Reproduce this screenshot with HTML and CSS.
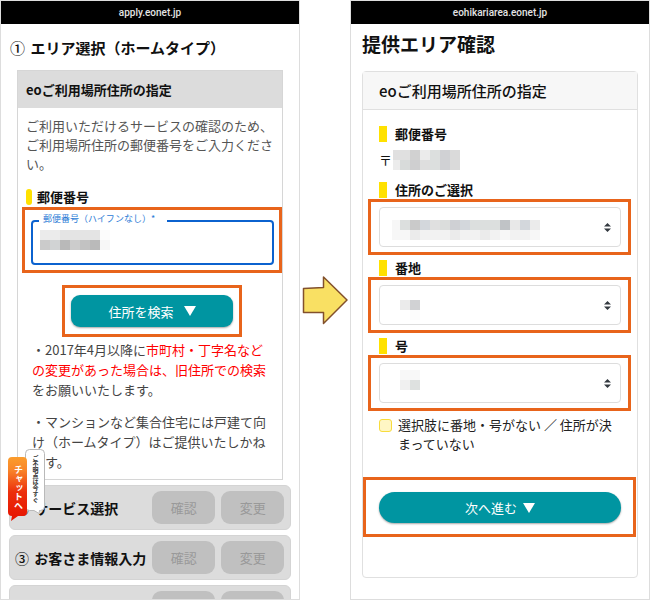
FILE: index.html
```html
<!DOCTYPE html>
<html lang="ja">
<head>
<meta charset="utf-8">
<title>eo エリア確認</title>
<link rel="stylesheet" href="styles.css">
</head>
<body>
<main class="page">
  <section class="phone phone-left">
    <div class="urlbar">apply.eonet.jp</div>
    <h1 class="step-title"><span class="num">①</span> エリア選択（ホームタイプ）</h1>
    <div class="panel">
      <h2 class="panel-head">eoご利用場所住所の指定</h2>
      <div class="panel-body">
        <p class="intro">ご利用いただけるサービスの確認のため、ご利用場所住所の郵便番号をご入力ください。</p>
        <h3 class="zip-heading">郵便番号</h3>
        <div class="mark mark-zip">
          <div class="field">
            <label class="field-label" for="zip">郵便番号（ハイフンなし）*</label>
            <input class="field-input" id="zip" type="text">
            <svg class="mosaic mosaic-zip" width="70" height="20" viewBox="0 0 7 2" shape-rendering="crispEdges" aria-hidden="true">
              <path fill="#ebebeb" d="M0 0h2v1H0z"/><path fill="#e4e4e4" d="M2 0h4v1H2z"/><path fill="#fcfcfc" d="M6 0h1v1H6z"/>
              <path fill="#cbcbcb" d="M0 1h1v1H0z"/><path fill="#d1d3d4" d="M1 1h1v1H1z"/><path fill="#b9b9b9" d="M2 1h1v1H2z"/>
              <path fill="#cccccc" d="M3 1h1v1H3z"/><path fill="#c2c2c2" d="M4 1h1v1H4z"/><path fill="#bababa" d="M5 1h1v1H5z"/><path fill="#f7f7f7" d="M6 1h1v1H6z"/>
            </svg>
          </div>
        </div>
        <div class="mark mark-search">
          <button class="btn btn-search" type="button">住所を検索
            <svg width="12" height="10" viewBox="0 0 12 10" aria-hidden="true"><path fill="#fff" d="M0 0h12L6 10z"/></svg>
          </button>
        </div>
        <p class="note">・2017年4月以降に<span class="alert">市町村・丁字名などの変更があった場合は、旧住所での検索</span>をお願いいたします。</p>
        <p class="note">・マンションなど集合住宅には戸建て向け（ホームタイプ）はご提供いたしかねます。</p>
      </div>
    </div>
    <div class="steps">
      <div class="step"><h2 class="step-name"><span class="num">②</span> サービス選択</h2><button class="step-btn" type="button" disabled>確認</button><button class="step-btn" type="button" disabled>変更</button></div>
      <div class="step"><h2 class="step-name"><span class="num">③</span> お客さま情報入力</h2><button class="step-btn" type="button" disabled>確認</button><button class="step-btn" type="button" disabled>変更</button></div>
      <div class="step"><h2 class="step-name"></h2><button class="step-btn" type="button" aria-label="確認" disabled></button><button class="step-btn" type="button" aria-label="変更" disabled></button></div>
    </div>
    <a class="chat" href="#">
      <svg class="chat-shape" width="37" height="72" viewBox="0 0 37 72" aria-hidden="true">
        <defs><linearGradient id="chatFill" x1="0" y1="0" x2="0" y2="1"><stop offset="0" stop-color="#fb9d2d"/><stop offset=".2" stop-color="#f9862a"/><stop offset=".55" stop-color="#ec2f0c"/><stop offset="1" stop-color="#e61200"/></linearGradient></defs>
        <path fill="#fff" stroke="#b9b9b9" d="M21.500.500h11a4 4 0 0 1 4 4v53a4 4 0 0 1-4 4h-1l-.500 3-5-3h-4.500a4 4 0 0 1-4-4v-53a4 4 0 0 1 4-4z"/>
        <path fill="url(#chatFill)" d="M4 8h11a4 4 0 0 1 4 4v51a4 4 0 0 1-4 4h-5l-7 5 1-5a4 4 0 0 1-4-4V12a4 4 0 0 1 4-4z"/>
      </svg>
      <span class="chat-main">チャットへ</span>
      <span class="chat-sub">ご不明点は今すぐ</span>
    </a>
  </section>

  <div class="flow">
    <svg width="46" height="50" viewBox="0 0 46 50" aria-hidden="true"><path fill="#f9e063" stroke="#82502c" stroke-width="1.500" stroke-linejoin="round" d="M1.500 13.500 21.500 12.500V2L45 25 21.500 48.500V37.500H1.500z"/></svg>
  </div>

  <section class="phone">
    <div class="urlbar">eohikariarea.eonet.jp</div>
    <h1 class="area-title">提供エリア確認</h1>
    <form class="card">
      <h2 class="card-head">eoご利用場所住所の指定</h2>
      <div class="card-body">
        <h3 class="label">郵便番号</h3>
        <p class="postal">〒
          <svg width="67" height="20" viewBox="0 0 67 20" shape-rendering="crispEdges" aria-hidden="true">
            <path fill="#e0e0e0" d="M0 0h17v10H0z"/><path fill="#d1d1d1" d="M17 0h10v10H17z"/><path fill="#ebebeb" d="M27 0h10v10H27z"/><path fill="#dcdfde" d="M37 0h10v20H37z"/><path fill="#d0d1d4" d="M47 0h10v20H47z"/><path fill="#dadada" d="M57 0h10v20H57z"/>
            <path fill="#ececec" d="M0 10h7v10H0z"/><path fill="#d8dbda" d="M7 10h10v10H7z"/><path fill="#cfcfd0" d="M17 10h10v10H17z"/><path fill="#dedede" d="M27 10h10v10H27z"/>
          </svg>
        </p>
        <label class="label" for="town">住所のご選択</label>
        <div class="mark mark-select">
          <div class="picker">
            <select class="select" id="town"><option></option></select>
            <svg class="mosaic mosaic-town" width="148" height="20" viewBox="0 0 148 20" shape-rendering="crispEdges" aria-hidden="true">
              <path fill="#f7f7f7" d="M0 0h148v20H0z"/>
              <path fill="#dcdfde" d="M8 0h10v10H8z"/><path fill="#cacaca" d="M18 0h10v10H18z"/><path fill="#d3d7dc" d="M28 0h10v10H28z"/><path fill="#e0e0e0" d="M38 0h10v10H38z"/><path fill="#dbdddc" d="M48 0h10v10H48z"/><path fill="#cfd0d4" d="M58 0h10v10H58z"/><path fill="#d3d7dc" d="M68 0h10v10H68z"/><path fill="#dcdfde" d="M78 0h30v10H78z"/><path fill="#c0c3c6" d="M108 0h10v10h-10z"/><path fill="#e8e8e8" d="M118 0h10v10h-10z"/><path fill="#d3d7dc" d="M128 0h10v10h-10z"/><path fill="#ebebeb" d="M138 0h10v10h-10z"/>
              <path fill="#ebebeb" d="M18 10h10v10H18zM58 10h10v10H58zM88 10h10v10H88z"/><path fill="#f2f2f2" d="M28 10h30v10H28zM68 10h20v10H68zM98 10h10v10H98zM118 10h20v10h-20z"/>
            </svg>
            <svg class="caret" width="7" height="9" viewBox="0 0 7 9" aria-hidden="true"><path fill="#343a40" d="M3.500 0 7 3.500H0zM0 5.500h7L3.500 9z"/></svg>
          </div>
        </div>
        <label class="label" for="block">番地</label>
        <div class="mark mark-select">
          <div class="picker">
            <select class="select" id="block"><option></option></select>
            <svg class="mosaic mosaic-block" width="20" height="20" viewBox="0 0 2 2" shape-rendering="crispEdges" aria-hidden="true"><path fill="#ebebeb" d="M0 0h1v1H0z"/><path fill="#d1d2d4" d="M1 0h1v1H1z"/><path fill="#fcfcfc" d="M1 1h1v1H1z"/></svg>
            <svg class="caret" width="7" height="9" viewBox="0 0 7 9" aria-hidden="true"><path fill="#343a40" d="M3.500 0 7 3.500H0zM0 5.500h7L3.500 9z"/></svg>
          </div>
        </div>
        <label class="label" for="number">号</label>
        <div class="mark mark-select">
          <div class="picker">
            <select class="select" id="number"><option></option></select>
            <svg class="mosaic mosaic-number" width="20" height="20" viewBox="0 0 2 2" shape-rendering="crispEdges" aria-hidden="true"><path fill="#f8f8f8" d="M0 0h2v1H0z"/><path fill="#f0f0f0" d="M0 1h1v1H0z"/><path fill="#dee1e0" d="M1 1h1v1H1z"/></svg>
            <svg class="caret" width="7" height="9" viewBox="0 0 7 9" aria-hidden="true"><path fill="#343a40" d="M3.500 0 7 3.500H0zM0 5.500h7L3.500 9z"/></svg>
          </div>
        </div>
        <div class="missing">
          <input class="check" id="missing" type="checkbox">
          <label for="missing">選択肢に番地・号がない ／ 住所が決まっていない</label>
        </div>
        <div class="mark mark-next">
          <button class="btn btn-next" type="button">次へ進む
            <svg width="12" height="10" viewBox="0 0 12 10" aria-hidden="true"><path fill="#fff" d="M0 0h12L6 10z"/></svg>
          </button>
        </div>
      </div>
    </form>
  </section>
</main>
</body>
</html>
```

FILE: styles.css
```css
* { box-sizing: border-box; }

body {
  margin: 0;
  background: #fff;
  color: #111;
  font-family: "Noto Sans CJK JP", sans-serif;
  font-size: 13px;
}

h1, h2, h3, p { margin: 0; }

button, input, select { font: inherit; }

svg { display: block; flex: none; }

.page {
  display: grid;
  grid-template-columns: minmax(0, 6fr) minmax(0, 1fr) minmax(0, 6fr);
  height: 100vh;
}

.phone {
  position: relative;
  overflow: hidden;
  border: 1px solid #ddd;
}

.urlbar {
  background: #000;
  color: #e4e4e4;
  font: 500 10px/23px Roboto, sans-serif;
  text-align: center;
}

.flow {
  display: flex;
  align-items: center;
  justify-content: center;
}

/* Orange frames around the controls to operate */
.mark { border: 3px solid #e8641b; }

.btn {
  display: flex;
  align-items: center;
  justify-content: center;
  width: 100%;
  padding: 0;
  border: 0;
  background: #0095a1;
  box-shadow: 0 1px 2px rgba(0, 0, 0, .35);
  color: #fff;
}

.mosaic { position: absolute; pointer-events: none; }

.num {
  margin-right: 2px;
  font-weight: 500;
}

/* Left screen */
.step-title {
  margin: 14px 9px 12px;
  font-size: 15px;
  font-weight: 700;
  line-height: 20px;
}

.panel {
  margin: 0 16px;
  border: 1px solid #d6d6d6;
}

.panel-head {
  padding: 0 8px;
  background: #dcdcdc;
  font-size: 13px;
  font-weight: 700;
  line-height: 37px;
}

.panel-body { padding: 8px 0 7px 4px; }

.intro {
  padding: 0 6px 0 4px;
  color: #555;
  line-height: 19px;
}

.zip-heading {
  display: flex;
  gap: 5px;
  margin: 16px 4px 2px;
  font-size: 13px;
  font-weight: 700;
  line-height: 16px;
}

.zip-heading::before {
  content: "";
  width: 6px;
  border-radius: 3px;
  background: #ffe100;
}

.mark-zip { padding: 10px 5px 5px 6px; }

.field { position: relative; }

.field-label {
  position: absolute;
  top: -7px;
  left: 8px;
  padding: 0 12px 0 4px;
  background: #fff;
  color: #2a7bd6;
  font-size: 9px;
  line-height: 12px;
}

.field-input {
  display: block;
  width: 100%;
  height: 45px;
  padding: 0 8px;
  border: 2px solid #0b62cf;
  border-radius: 4px;
  background: #fff;
}

.mosaic-zip { top: 10px; left: 9px; }

.mark-search {
  width: 180px;
  margin: 12px auto 3px;
  padding: 7px 6px;
}

.btn-search {
  gap: 10px;
  height: 32px;
  border-radius: 9px;
}

.note {
  padding: 0 8px 0 10px;
  color: #444;
  line-height: 20px;
}

.note + .note { margin-top: 12px; }

.alert { color: #f00; }

.steps {
  display: grid;
  gap: 5px;
  margin: 5px 8px 0;
}

.step {
  display: flex;
  align-items: center;
  gap: 6px;
  height: 45px;
  padding: 0 6px 0 5px;
  border: 1px solid #d4d4d4;
  border-radius: 6px;
  background: #dcdcdc;
}

.step-name {
  flex: 1;
  font-size: 14px;
  font-weight: 700;
  line-height: 20px;
  white-space: nowrap;
}

.step-btn {
  width: 63px;
  height: 33px;
  padding: 0;
  border: 0;
  border-radius: 9px;
  background: #c0c0c0;
  color: #999;
}

.chat {
  position: absolute;
  top: 448px;
  left: 7px;
  font-weight: 700;
  text-decoration: none;
}

.chat-main, .chat-sub {
  position: absolute;
  white-space: nowrap;
  writing-mode: vertical-rl;
}

.chat-main {
  top: 16px;
  left: 4px;
  color: #fff;
  font-size: 9px;
  line-height: 12px;
}

.chat-sub {
  top: 6px;
  left: 22px;
  color: #333;
  font-size: 6px;
  line-height: 10px;
}

/* Right screen */
.area-title {
  margin: 7px 11px 15px;
  font-size: 19px;
  font-weight: 700;
  line-height: 25px;
}

.card {
  margin: 0 11px;
  border: 1px solid #e0e0e0;
  border-radius: 4px;
}

.card-head {
  padding: 0 16px;
  border-bottom: 1px solid #e0e0e0;
  background: #f7f7f7;
  font-size: 15px;
  font-weight: 500;
  line-height: 37px;
}

.card-body { padding: 16px 16px 40px; }

.label {
  display: flex;
  gap: 8px;
  margin-top: 5px;
  font-size: 13px;
  font-weight: 700;
  line-height: 16px;
}

.label:first-child { margin-top: 0; }

.label::before {
  content: "";
  width: 8px;
  background: #ffe100;
}

.postal {
  display: flex;
  gap: 1px;
  margin: 8px 0 12px;
  line-height: 20px;
}

.mark-select {
  margin: 1px -10px 0 -11px;
  padding: 5px 7px 5px 8px;
}

.picker { position: relative; }

.select {
  display: block;
  width: 100%;
  height: 40px;
  padding: 0 20px 0 12px;
  border: 1px solid #ddd;
  border-radius: 4px;
  background: #fff;
  appearance: none;
}

.caret {
  position: absolute;
  top: 16px;
  right: 10px;
  pointer-events: none;
}

.mosaic-town { top: 13px; left: 13px; }
.mosaic-block { top: 15px; left: 21px; }
.mosaic-number { top: 7px; left: 21px; }

.missing {
  display: flex;
  align-items: flex-start;
  gap: 6px;
  margin-top: 4px;
  color: #222;
  line-height: 19px;
}

.check {
  flex: none;
  width: 13px;
  height: 13px;
  margin: 4px 0 0;
  border: 1px solid #f8dc3c;
  border-radius: 3px;
  background: #fff6c4;
  appearance: none;
}

.mark-next {
  margin: 24px -15px 0 -16px;
  padding: 12px 12px 11px 13px;
}

.btn-next {
  gap: 6px;
  height: 31px;
  border-radius: 16px;
}
```
